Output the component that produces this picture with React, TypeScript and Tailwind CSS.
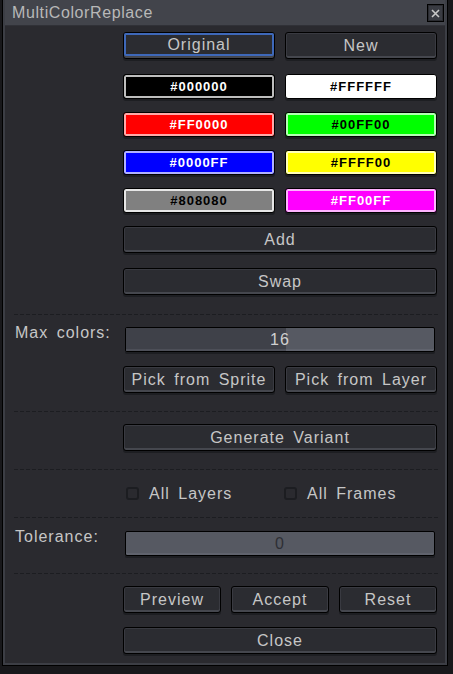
import type { ReactNode } from "react";
import clsx from "clsx";

const swatches = [
  { hex: "#000000", tint: "#bdbdbd", text: "text-white" },
  { hex: "#FFFFFF", tint: "#ffffff", text: "text-black" },
  { hex: "#FF0000", tint: "#ffa8a8", text: "text-white" },
  { hex: "#00FF00", tint: "#b3ffb3", text: "text-black" },
  { hex: "#0000FF", tint: "#b0b0ff", text: "text-white" },
  { hex: "#FFFF00", tint: "#ffffb8", text: "text-black" },
  { hex: "#808080", tint: "#e6e6e6", text: "text-black" },
  { hex: "#FF00FF", tint: "#ffb3ff", text: "text-white" },
];

function Btn({ children, className }: { children: ReactNode; className?: string }) {
  return (
    <div
      className={clsx(
        "flex h-[27px] items-center justify-center whitespace-nowrap rounded-[3px] border border-black bg-[#2b2c31] text-[16px] tracking-[1px] [word-spacing:3px] text-[#c6c6c6] shadow-[inset_0_-2px_0_#45474e,inset_0_0_0_1px_#393a41,0_2px_0_#1d1e22]",
        className
      )}
    >
      {children}
    </div>
  );
}

function Swatch({ hex, tint, text }: { hex: string; tint: string; text: string }) {
  return (
    <div
      className={clsx(
        "flex h-[25px] items-center justify-center rounded-[3px] border border-black text-[13px] font-bold tracking-[1px]",
        text
      )}
      style={{ backgroundColor: hex, boxShadow: `inset 0 0 0 2px ${tint}, 0 2px 0 #1d1e22` }}
    >
      {hex}
    </div>
  );
}

function Slider({ value, pct, dark }: { value: string; pct: number; dark?: boolean }) {
  return (
    <div className="relative mx-[2px] flex h-[25px] overflow-hidden rounded-[2px] border border-black bg-[#565962] shadow-[inset_0_-2px_0_#60636d,0_2px_0_#1d1e22]">
      <div className="h-full bg-[#3f4149] shadow-[inset_0_-2px_0_#4d4f58]" style={{ width: `${pct}%` }} />
      <span
        className={clsx(
          "absolute inset-0 flex items-center justify-center text-[16px] tracking-[1px]",
          dark ? "text-[#2e2f35]" : "text-[#d0d0d0]"
        )}
      >
        {value}
      </span>
    </div>
  );
}

function Divider() {
  return <div className="mx-[-1px] h-px bg-[repeating-linear-gradient(90deg,#1c1d21_0_4px,transparent_4px_6px)]" />;
}

function Check({ label, className }: { label: string; className?: string }) {
  return (
    <div className={clsx("flex h-[13px] items-center gap-[10px]", className)}>
      <div className="h-[13px] w-[13px] rounded-[3px] border-2 border-[#1c1d21]" />
      <span className="text-[16px] leading-[13px] tracking-[1px] [word-spacing:3px] text-[#c6c6c6]">{label}</span>
    </div>
  );
}

export default function App() {
  return (
    <div className="h-[674px] w-[453px] bg-[#18181b] pb-[8px] pl-[2px] pr-[5px] font-['Liberation_Sans',Arial,sans-serif]">
      <div className="flex h-full flex-col border border-t-0 border-black bg-[#3c3e45] px-[2px] pb-[2px]">
        <div className="flex h-[26px] items-start justify-between bg-[#42444b] pl-[7px] pr-[1px] shadow-[inset_0_-1px_0_#303137]">
          <span className="text-[16px] leading-[25px] tracking-[0.6px] text-[#b8b8b8]">MultiColorReplace</span>
          <div className="mt-[4px] flex h-[18px] w-[17px] items-center justify-center border border-black bg-[#393b42] shadow-[inset_0_0_0_1px_#2a2b30]">
            <svg width="9" height="9" viewBox="0 0 9 9">
              <path d="M1 1L8 8M8 1L1 8" stroke="#c8c8c8" strokeWidth="1.6" />
            </svg>
          </div>
        </div>

        <div className="flex flex-1 flex-col bg-[#2a2a2f] pl-[10px] pr-[8px] pt-[6px]">
          <div className="ml-[108px] grid grid-cols-2 gap-[10px]">
            <div className="h-[27px] rounded-[3px] border border-black bg-[#45474e] pb-[2px] shadow-[0_2px_0_#1d1e22]">
              <div className="flex h-full items-center justify-center rounded-[2px] border-2 border-[#3e68b9] bg-[#2b2c31] text-[16px] tracking-[1px] text-[#c6c6c6]">
                Original
              </div>
            </div>
            <Btn>New</Btn>
          </div>

          <div className="ml-[108px] mt-[15px] grid grid-cols-2 gap-x-[10px] gap-y-[13px]">
            {swatches.map((s) => (
              <Swatch key={s.hex} {...s} />
            ))}
          </div>

          <Btn className="ml-[108px] mt-[13px]">Add</Btn>
          <Btn className="ml-[108px] mt-[15px]">Swap</Btn>

          <div className="mt-[19px]">
            <Divider />
          </div>

          <div className="mt-[12px] flex">
            <div className="w-[108px] text-[16px] leading-[12px] tracking-[1px] [word-spacing:3px] text-[#c6c6c6]">Max colors:</div>
            <div className="flex-1">
              <Slider value="16" pct={52} />
            </div>
          </div>

          <div className="ml-[108px] mt-[14px] grid grid-cols-2 gap-[10px]">
            <Btn>Pick from Sprite</Btn>
            <Btn>Pick from Layer</Btn>
          </div>

          <div className="mt-[18px]">
            <Divider />
          </div>

          <Btn className="ml-[108px] mt-[12px]">Generate Variant</Btn>

          <div className="mt-[18px]">
            <Divider />
          </div>

          <div className="ml-[108px] mt-[17px] grid grid-cols-2 gap-[10px]">
            <Check label="All Layers" className="pl-[3px]" />
            <Check label="All Frames" className="-ml-px" />
          </div>

          <div className="mt-[17px]">
            <Divider />
          </div>

          <div className="mt-[13px] flex">
            <div className="w-[108px] text-[16px] leading-[12px] tracking-[1px] text-[#c6c6c6]">Tolerance:</div>
            <div className="flex-1">
              <Slider value="0" pct={0} dark />
            </div>
          </div>

          <div className="mt-[17px]">
            <Divider />
          </div>

          <div className="ml-[108px] mt-[12px] grid grid-cols-3 gap-[10px]">
            <Btn>Preview</Btn>
            <Btn>Accept</Btn>
            <Btn>Reset</Btn>
          </div>

          <Btn className="ml-[108px] mt-[14px]">Close</Btn>
        </div>
      </div>
    </div>
  );
}
